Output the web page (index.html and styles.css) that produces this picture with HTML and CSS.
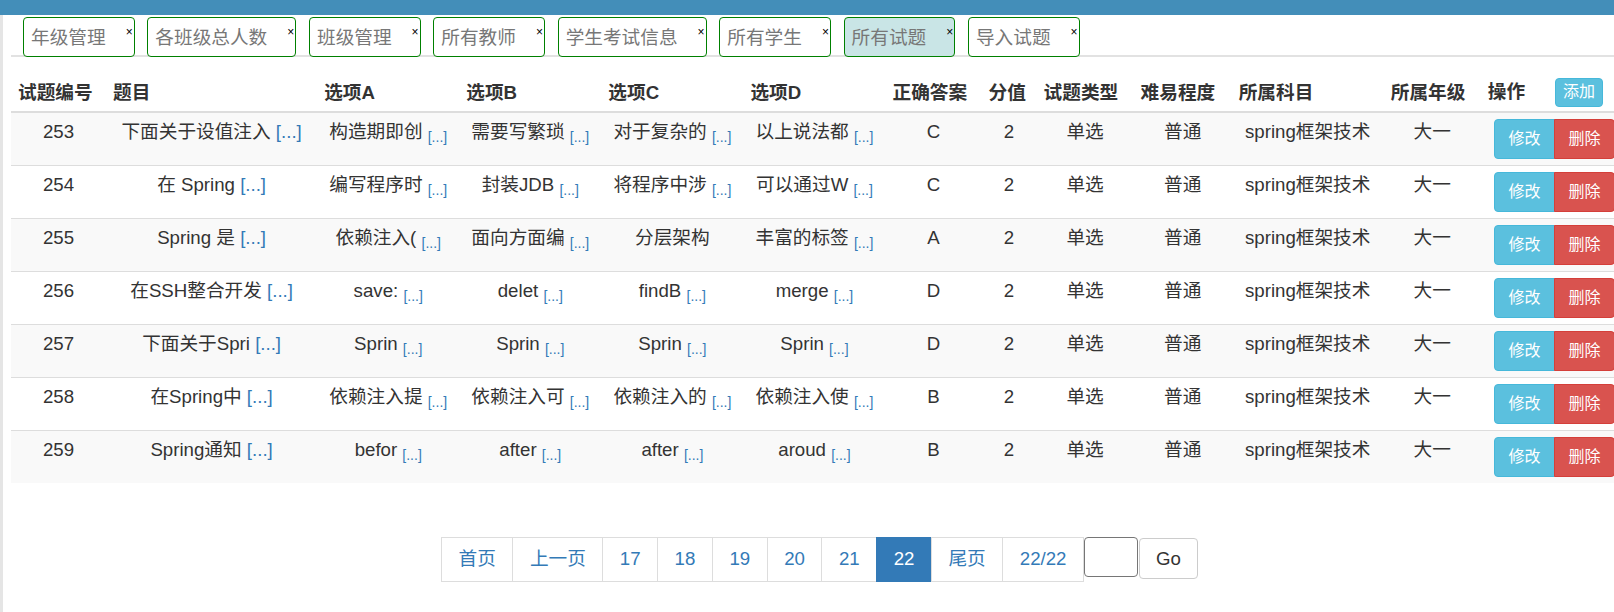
FILE: index.html
```html
<!DOCTYPE html>
<html lang="zh-CN">
<head>
<meta charset="utf-8">
<title>所有试题</title>
<link rel="stylesheet" href="styles.css">
</head>
<body>
<div class="topbar"></div>
<div class="main">
  <div class="content">
    <div class="tabs">
      <div class="tab"><span class="tab-label">年级管理</span><span class="tab-close">×</span></div>
      <div class="tab"><span class="tab-label">各班级总人数</span><span class="tab-close">×</span></div>
      <div class="tab"><span class="tab-label">班级管理</span><span class="tab-close">×</span></div>
      <div class="tab"><span class="tab-label">所有教师</span><span class="tab-close">×</span></div>
      <div class="tab"><span class="tab-label">学生考试信息</span><span class="tab-close">×</span></div>
      <div class="tab"><span class="tab-label">所有学生</span><span class="tab-close">×</span></div>
      <div class="tab active"><span class="tab-label">所有试题</span><span class="tab-close">×</span></div>
      <div class="tab"><span class="tab-label">导入试题</span><span class="tab-close">×</span></div>
    </div>

    <table class="grid">
      <colgroup>
        <col class="c-id"><col class="c-title"><col class="c-opt"><col class="c-opt"><col class="c-opt"><col class="c-opt">
        <col class="c-ans"><col class="c-score"><col class="c-type"><col class="c-level"><col class="c-subject"><col class="c-grade"><col class="c-ops">
      </colgroup>
      <thead>
        <tr>
          <th>试题编号</th><th>题目</th><th>选项A</th><th>选项B</th><th>选项C</th><th>选项D</th>
          <th>正确答案</th><th>分值</th><th>试题类型</th><th>难易程度</th><th>所属科目</th><th>所属年级</th>
          <th>操作<button class="btn-add">添加</button></th>
        </tr>
      </thead>
      <tbody>
        <tr>
          <td>253</td><td>下面关于设值注入 <a class="more">[...]</a></td>
          <td>构造期即创 <sub><a class="more">[...]</a></sub></td>
          <td>需要写繁琐 <sub><a class="more">[...]</a></sub></td>
          <td>对于复杂的 <sub><a class="more">[...]</a></sub></td>
          <td>以上说法都 <sub><a class="more">[...]</a></sub></td>
          <td>C</td><td>2</td><td>单选</td><td>普通</td><td>spring框架技术</td><td>大一</td>
          <td><div class="btn-group"><button class="btn btn-edit">修改</button><button class="btn btn-del">删除</button></div></td>
        </tr>
        <tr>
          <td>254</td><td>在 Spring <a class="more">[...]</a></td>
          <td>编写程序时 <sub><a class="more">[...]</a></sub></td>
          <td>封装JDB <sub><a class="more">[...]</a></sub></td>
          <td>将程序中涉 <sub><a class="more">[...]</a></sub></td>
          <td>可以通过W <sub><a class="more">[...]</a></sub></td>
          <td>C</td><td>2</td><td>单选</td><td>普通</td><td>spring框架技术</td><td>大一</td>
          <td><div class="btn-group"><button class="btn btn-edit">修改</button><button class="btn btn-del">删除</button></div></td>
        </tr>
        <tr>
          <td>255</td><td>Spring 是 <a class="more">[...]</a></td>
          <td>依赖注入( <sub><a class="more">[...]</a></sub></td>
          <td>面向方面编 <sub><a class="more">[...]</a></sub></td>
          <td>分层架构</td>
          <td>丰富的标签 <sub><a class="more">[...]</a></sub></td>
          <td>A</td><td>2</td><td>单选</td><td>普通</td><td>spring框架技术</td><td>大一</td>
          <td><div class="btn-group"><button class="btn btn-edit">修改</button><button class="btn btn-del">删除</button></div></td>
        </tr>
        <tr>
          <td>256</td><td>在SSH整合开发 <a class="more">[...]</a></td>
          <td>save: <sub><a class="more">[...]</a></sub></td>
          <td>delet <sub><a class="more">[...]</a></sub></td>
          <td>findB <sub><a class="more">[...]</a></sub></td>
          <td>merge <sub><a class="more">[...]</a></sub></td>
          <td>D</td><td>2</td><td>单选</td><td>普通</td><td>spring框架技术</td><td>大一</td>
          <td><div class="btn-group"><button class="btn btn-edit">修改</button><button class="btn btn-del">删除</button></div></td>
        </tr>
        <tr>
          <td>257</td><td>下面关于Spri <a class="more">[...]</a></td>
          <td>Sprin <sub><a class="more">[...]</a></sub></td>
          <td>Sprin <sub><a class="more">[...]</a></sub></td>
          <td>Sprin <sub><a class="more">[...]</a></sub></td>
          <td>Sprin <sub><a class="more">[...]</a></sub></td>
          <td>D</td><td>2</td><td>单选</td><td>普通</td><td>spring框架技术</td><td>大一</td>
          <td><div class="btn-group"><button class="btn btn-edit">修改</button><button class="btn btn-del">删除</button></div></td>
        </tr>
        <tr>
          <td>258</td><td>在Spring中 <a class="more">[...]</a></td>
          <td>依赖注入提 <sub><a class="more">[...]</a></sub></td>
          <td>依赖注入可 <sub><a class="more">[...]</a></sub></td>
          <td>依赖注入的 <sub><a class="more">[...]</a></sub></td>
          <td>依赖注入使 <sub><a class="more">[...]</a></sub></td>
          <td>B</td><td>2</td><td>单选</td><td>普通</td><td>spring框架技术</td><td>大一</td>
          <td><div class="btn-group"><button class="btn btn-edit">修改</button><button class="btn btn-del">删除</button></div></td>
        </tr>
        <tr>
          <td>259</td><td>Spring通知 <a class="more">[...]</a></td>
          <td>befor <sub><a class="more">[...]</a></sub></td>
          <td>after <sub><a class="more">[...]</a></sub></td>
          <td>after <sub><a class="more">[...]</a></sub></td>
          <td>aroud <sub><a class="more">[...]</a></sub></td>
          <td>B</td><td>2</td><td>单选</td><td>普通</td><td>spring框架技术</td><td>大一</td>
          <td><div class="btn-group"><button class="btn btn-edit">修改</button><button class="btn btn-del">删除</button></div></td>
        </tr>
      </tbody>
    </table>

    <div class="pager">
      <ul class="pagination">
        <li><a>首页</a></li>
        <li><a>上一页</a></li>
        <li><a>17</a></li>
        <li><a>18</a></li>
        <li><a>19</a></li>
        <li><a>20</a></li>
        <li><a>21</a></li>
        <li class="active"><a>22</a></li>
        <li><a>尾页</a></li>
        <li><a>22/22</a></li>
      </ul>
      <input class="page-input" type="text">
      <button class="go">Go</button>
    </div>
  </div>
</div>
</body>
</html>
```

FILE: styles.css
```css
html, body {
  margin: 0;
  padding: 0;
  background: #fff;
}

body {
  font-family: "Liberation Sans", Arial, "Noto Sans CJK SC", sans-serif;
  font-size: 18.67px;
  line-height: 26.67px;
  color: #333;
  height: 612px;
  overflow: hidden;
}

.topbar {
  height: 15px;
  background: #438eb9;
}

.main {
  border-left: 3px solid #e5e5e5;
  padding-left: 8px;
  height: 597px;
}

.content {
  width: 1617px;
}

/* ---------- tabs ---------- */
.tabs {
  display: flex;
  gap: 12.7px;
  padding: 2px 0 0 12px;
  height: 38px;
  border-bottom: 2px solid #e2e2e2;
}

.tab {
  box-sizing: border-box;
  height: 40px;
  border: 1px solid #008000;
  border-radius: 4px;
  background: #fff;
  display: flex;
  align-items: flex-start;
  color: #777;
}

.tab.active {
  background: #c9e5e6;
}

.tab-label {
  padding: 7px 0 0 7px;
  line-height: 26.67px;
}

.tab-close {
  font-size: 12px;
  line-height: 12px;
  color: #000;
  margin: 8px 1px 0 20px;
}

/* ---------- table ---------- */
.grid {
  border-collapse: collapse;
  table-layout: fixed;
  width: 1617px;
  margin: 14.7px 0 0;
}

.c-id { width: 95px; }
.c-title { width: 211px; }
.c-opt { width: 142px; }
.c-ans { width: 96px; }
.c-score { width: 55px; }
.c-type { width: 97px; }
.c-level { width: 98px; }
.c-subject { width: 152px; }
.c-grade { width: 97px; }
.c-ops { width: 147px; }

.grid th {
  text-align: left;
  font-weight: bold;
  vertical-align: bottom;
  padding: 6px 7px 4px;
  border-bottom: 2px solid #ddd;
  white-space: nowrap;
}

.grid td {
  text-align: center;
  vertical-align: top;
  padding: 6px 7px;
  border-top: 1px solid #ddd;
  white-space: nowrap;
}

.grid tbody tr:nth-child(odd) td {
  background: #f9f9f9;
}

.more {
  color: #337ab7;
  text-decoration: none;
}

.grid sub {
  font-size: 14px;
  line-height: 0;
  vertical-align: -3.5px;
}

.btn-add {
  box-sizing: border-box;
  height: 29px;
  width: 48px;
  margin-left: 30px;
  padding: 0;
  border: 1px solid #46b8da;
  border-radius: 4px;
  background: #5bc0de;
  color: #fff;
  font-family: "Liberation Sans", "Noto Sans CJK SC", sans-serif;
  font-size: 16px;
  line-height: 24px;
  font-weight: normal;
}

.btn-group {
  display: inline-flex;
  vertical-align: top;
}

.btn {
  box-sizing: border-box;
  height: 40px;
  width: 61px;
  padding: 0;
  border: 1px solid;
  color: #fff;
  font-family: "Liberation Sans", "Noto Sans CJK SC", sans-serif;
  font-size: 16px;
  line-height: 24px;
}

.btn-edit {
  background: #5bc0de;
  border-color: #46b8da;
  border-radius: 4px 0 0 4px;
}

.btn-del {
  background: #d9534f;
  border-color: #d43f3a;
  border-radius: 0 4px 4px 0;
  margin-left: -1px;
}

/* ---------- pager ---------- */
.pager {
  display: flex;
  justify-content: center;
  align-items: flex-start;
  margin-top: 54.6px;
}

.pagination {
  display: flex;
  list-style: none;
  margin: 0;
  padding: 0;
}

.pagination a {
  display: block;
  padding: 8px 16.5px;
  line-height: 26.67px;
  border: 1px solid #ddd;
  margin-left: -1px;
  color: #337ab7;
  background: #fff;
}

.pagination li:first-child a {
  margin-left: 0;
}

.pagination li.active a {
  background: #337ab7;
  border-color: #337ab7;
  color: #fff;
}

.page-input {
  box-sizing: border-box;
  width: 54px;
  height: 39.5px;
  margin: 0;
  padding: 0;
  border: 1px solid #767676;
  border-radius: 4px;
  background: #fff;
}

.go {
  box-sizing: border-box;
  width: 59px;
  height: 40.5px;
  margin: 1px 0 0 1px;
  padding: 0;
  border: 1px solid #ccc;
  border-radius: 4px;
  background: #fff;
  color: #333;
  font-family: "Liberation Sans", Arial, sans-serif;
  font-size: 18.67px;
}
```
